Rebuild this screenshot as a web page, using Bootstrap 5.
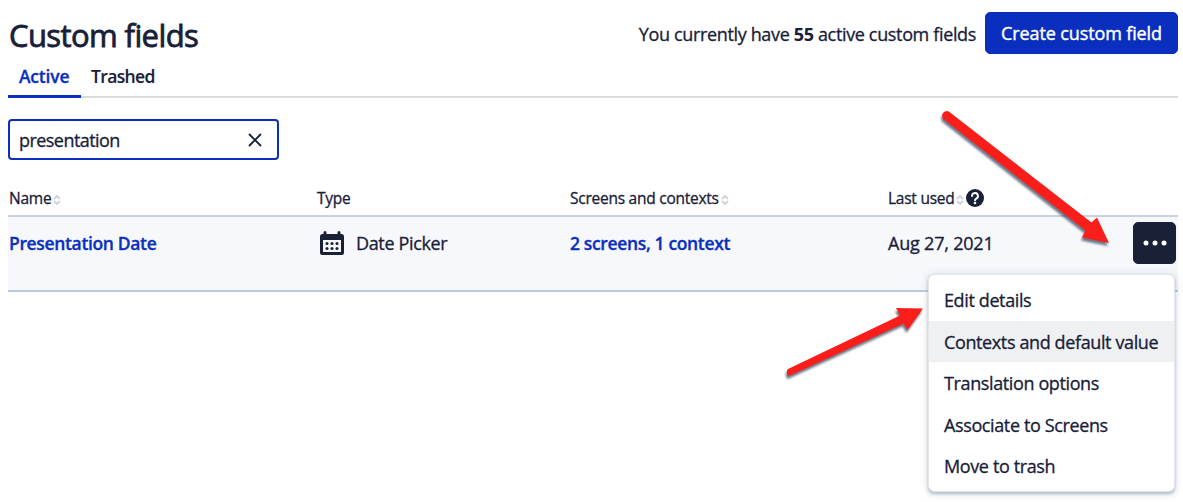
<!DOCTYPE html>
<html lang="en">
<head>
<meta charset="utf-8">
<meta name="viewport" content="width=device-width, initial-scale=1">
<title>Custom fields</title>
<link href="https://cdn.jsdelivr.net/npm/bootstrap@5.3.0/dist/css/bootstrap.min.css" rel="stylesheet">
<style>
  :root { --ink: #172038; --brand: #0a2fbe; --rule: #dcdcde; }
  body { font-family: "Open Sans", "Noto Sans", sans-serif; font-size: 18px; letter-spacing: -.35px; -webkit-text-stroke: .3px; color: var(--ink); line-height: 24px; height: 502px; overflow: hidden; white-space: nowrap; }
  svg { -webkit-text-stroke: 0; }
  .page { padding: 12px 5px 0 8px; }
  .page-head { height: 42px; }
  .page-head h1 { font-size: 31px; font-weight: 400; letter-spacing: -.6px; line-height: 42px; padding: 3px 0 0 1px; -webkit-text-stroke: .8px; }
  .page-head b { font-weight: 700; -webkit-text-stroke: 0; }
  .count { padding: 1px 1px 0 0; }
  .btn-create { --bs-btn-color: #fff; --bs-btn-bg: var(--brand); --bs-btn-border-color: var(--brand); width: 193px; height: 42px; padding: 0; border-radius: 5px; font-size: 18px; letter-spacing: -.12px; -webkit-text-stroke: .4px; }
  .tabs { height: 44px; border-bottom: 2px solid var(--rule); }
  .tabs .nav-link { padding: 10px 10px 0; height: 44px; color: var(--ink); font-size: 17.5px; font-weight: 600; letter-spacing: -.65px; -webkit-text-stroke: .1px; }
  .tabs .nav-link.active { color: var(--brand); border-bottom: 3px solid var(--brand); width: 73px; padding-left: 11px; letter-spacing: -.2px; -webkit-text-stroke: .3px; }
  .search { width: 271px; height: 41px; margin-top: 21px; border: 2px solid var(--brand); border-radius: 4px; padding: 1px 15px 0 9px; }
  .query { letter-spacing: -.55px; }
  .fields { margin: 17px 0 0; table-layout: fixed; color: var(--ink); --bs-table-bg: transparent; border-color: #c3cedd; width: 1170px; }
  .fields th { height: 39px; padding: 9px 0 0 1px; font-size: 15.5px; font-weight: 400; letter-spacing: -.25px; line-height: 24px; vertical-align: top; border-bottom: 2px solid #c9d1dc; }
  .sort { margin-left: -2px; }
  .help { margin: -4px 0 0 -2px; }
  .fields td { height: 75px; padding: 14px 0 0 1px; background: #f6f8fb; border-bottom: 2px solid #bdcadd; vertical-align: top; }
  .fields a { color: var(--brand); font-size: 17.5px; font-weight: 600; letter-spacing: -.35px; text-decoration: none; -webkit-text-stroke: .3px; }
  .cal { margin: 0 12px 0 3px; }
  .f-date { letter-spacing: -.2px; }
  .btn-more { --bs-btn-bg: #1a2036; --bs-btn-border-color: #1a2036; width: 43px; height: 42px; border-radius: 5px; margin: -9px 0 0 -1px; padding: 0; }
  .actions { display: block; position: absolute; left: 928px; top: 274px; width: 247px; height: 218px; padding: 4px 0; border: 1px solid #e2e5ea; border-radius: 6px; box-shadow: 0 2px 3px #98a8bfb0, 0 1px 8px #8894a855; }
  .actions .dropdown-item { height: 41.6px; padding: 9px 16px 0 15px; color: var(--ink); font-size: 18px; letter-spacing: -.38px; line-height: 24px; }
  .actions .dropdown-item.current { background: #eff0f1; }
  .arrows { position: absolute; left: 0; top: 0; pointer-events: none; filter: drop-shadow(-1px 3px 1px #26344fa8); }
</style>
</head>
<body>
<main class="page">
  <header class="page-head d-flex align-items-center justify-content-between">
    <h1 class="m-0">Custom fields</h1>
    <div class="d-flex align-items-center gap-2">
      <span class="count">You currently have <b>55</b> active custom fields</span>
      <button class="btn btn-create" type="button">Create custom field</button>
    </div>
  </header>
  <nav class="nav tabs flex-nowrap">
    <a class="nav-link active" href="#">Active</a>
    <a class="nav-link" href="#">Trashed</a>
  </nav>
  <div class="search d-flex align-items-center justify-content-between">
    <span class="query">presentation</span>
    <svg width="14" height="14" viewBox="0 0 14 14" stroke="#172038" stroke-width="1.8" stroke-linecap="round"><path d="M1.500 1.500l11 11M12.500 1.500l-11 11"/></svg>
  </div>
  <table class="table fields">
    <colgroup><col style="width:308px"><col style="width:253px"><col style="width:318px"><col style="width:246px"><col></colgroup>
    <thead><tr>
      <th>Name <svg class="sort" width="8" height="10" viewBox="0 0 8 10" fill="none" stroke="#cdd2da" stroke-width="1.8"><path d="M1 4l3-3 3 3M1 6l3 3 3-3"/></svg></th>
      <th>Type</th>
      <th>Screens and contexts <svg class="sort" width="8" height="10" viewBox="0 0 8 10" fill="none" stroke="#cdd2da" stroke-width="1.8"><path d="M1 4l3-3 3 3M1 6l3 3 3-3"/></svg></th>
      <th>Last used <svg class="sort" width="8" height="10" viewBox="0 0 8 10" fill="none" stroke="#cdd2da" stroke-width="1.8"><path d="M1 4l3-3 3 3M1 6l3 3 3-3"/></svg>
        <svg class="help" width="18" height="18" viewBox="0 0 18 18"><circle cx="9" cy="9" r="9" fill="#172038"/><path d="M6 7a3 3 0 1 1 4.700 2.400C9.600 10 9 10.300 9 11.200" fill="none" stroke="#fff" stroke-width="2" stroke-linecap="round"/><circle cx="9" cy="14" r="1.300" fill="#fff"/></svg></th>
      <th></th>
    </tr></thead>
    <tbody><tr>
      <td><a href="#">Presentation Date</a></td>
      <td><span class="d-flex align-items-center"><svg class="cal" width="24" height="24" viewBox="0 0 24 24"><path fill="#1a2036" fill-rule="evenodd" d="M3.500 1.500a1.500 1.500 0 0 1 3 0V3h11V1.500a1.500 1.500 0 0 1 3 0V3h1A2.500 2.500 0 0 1 24 5.500v16a2.500 2.500 0 0 1-2.500 2.500h-19A2.500 2.500 0 0 1 0 21.500v-16A2.500 2.500 0 0 1 2.500 3h1zM3 9v12h18V9z"/><g fill="#1a2036"><circle cx="7" cy="12.500" r="1.500"/><circle cx="12" cy="12.500" r="1.500"/><circle cx="17" cy="12.500" r="1.500"/><circle cx="7" cy="17.500" r="1.500"/><circle cx="12" cy="17.500" r="1.500"/><circle cx="17" cy="17.500" r="1.500"/></g></svg>Date Picker</span></td>
      <td><a href="#">2 screens, 1 context</a></td>
      <td><span class="f-date">Aug 27, 2021</span></td>
      <td><button class="btn btn-more d-flex align-items-center justify-content-center" type="button" aria-label="More actions"><svg width="24" height="6" viewBox="0 0 24 6" fill="#fff"><circle cx="3" cy="3" r="2.500"/><circle cx="12" cy="3" r="2.500"/><circle cx="21" cy="3" r="2.500"/></svg></button></td>
    </tr></tbody>
  </table>
</main>
<div class="dropdown-menu actions">
  <a class="dropdown-item" href="#">Edit details</a>
  <a class="dropdown-item current" href="#">Contexts and default value</a>
  <a class="dropdown-item" href="#">Translation options</a>
  <a class="dropdown-item" href="#">Associate to Screens</a>
  <a class="dropdown-item" href="#">Move to trash</a>
</div>
<svg class="arrows" width="1183" height="502" viewBox="0 0 1183 502" fill="#fa1e1a">
  <path d="M944 119.500a4.500 4.500 0 0 1 5.500-7.500L1091.500 222.500 1097 217.500 1109 243 1082 237.500 1085.500 230.500z"/>
  <path d="M789 376a4.500 4.500 0 0 1-1-7L900 315.500 896 308 923 308.500 907.500 330 903.500 323.500z"/>
</svg>
<script src="https://cdn.jsdelivr.net/npm/bootstrap@5.3.0/dist/js/bootstrap.bundle.min.js"></script>
</body>
</html>
